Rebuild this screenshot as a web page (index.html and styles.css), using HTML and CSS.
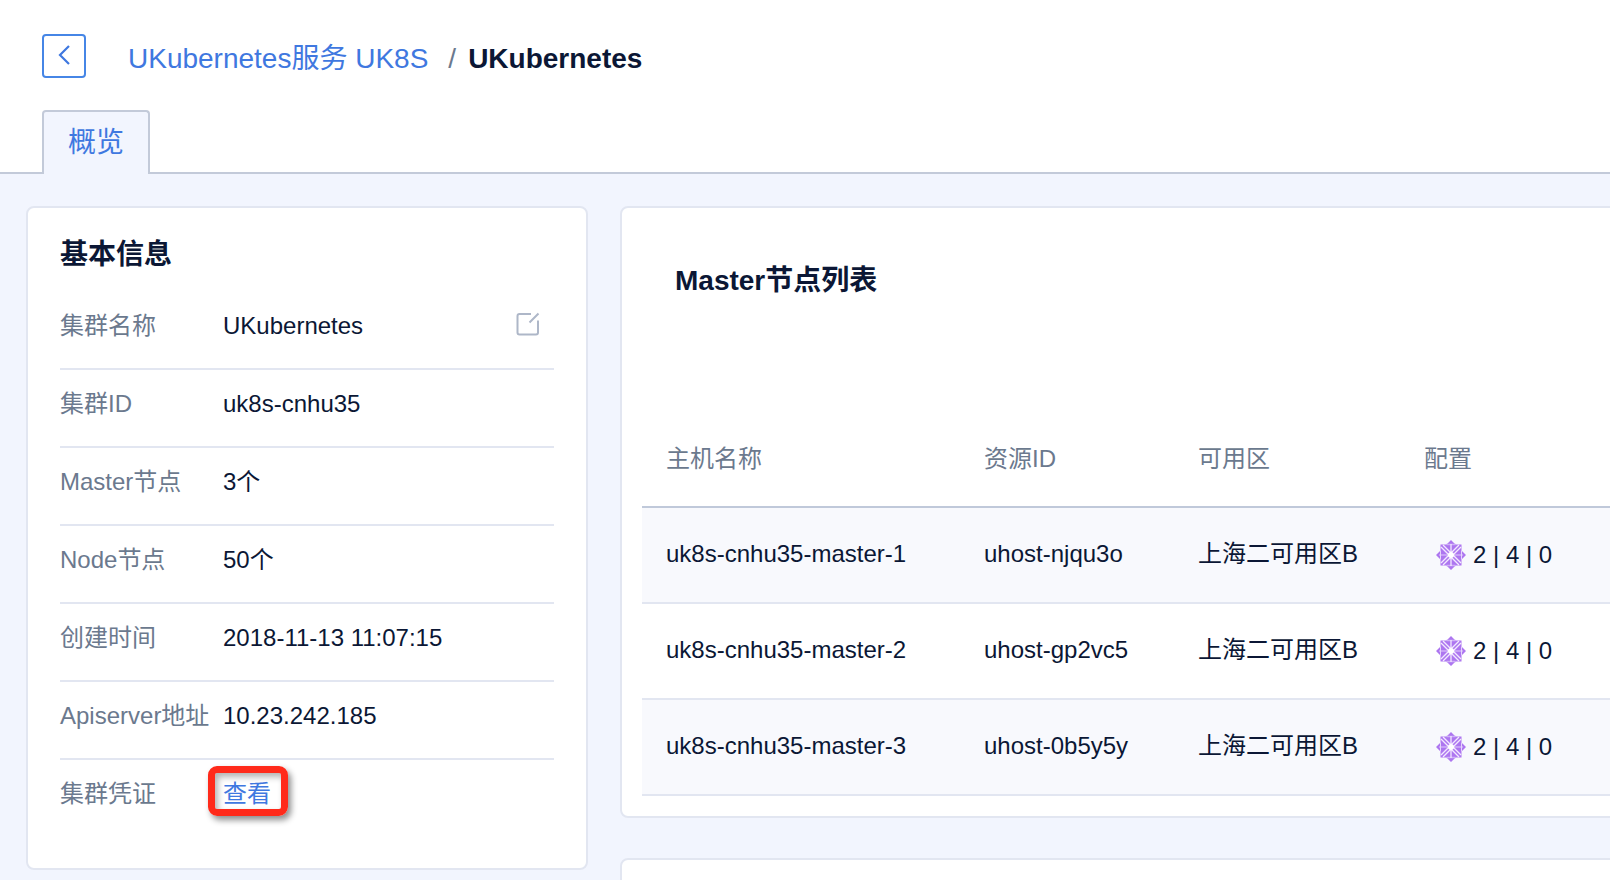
FILE: index.html
```html
<!DOCTYPE html>
<html lang="zh-CN">
<head>
<meta charset="utf-8">
<title>UKubernetes</title>
<link rel="stylesheet" href="styles.css">
</head>
<body>
<svg class="sprite" aria-hidden="true">
  <symbol id="star" viewBox="0 0 30 30">
    <path fill="#ad76f0" d="M15 0l4.500 4.500H25.500V10.500L30 15l-4.500 4.500V25.500H19.500L15 30l-4.500-4.500H4.500V19.500L0 15l4.500-4.500V4.500H10.500z"/>
    <path stroke="#cfb0f7" stroke-width="1.500" d="M3 15H27M10.500 4.500H19.500M10.500 25.500H19.500"/>
    <path stroke="#e6d6fb" stroke-width="1" d="M4.500 10.500V19.500M25.500 10.500V19.500"/>
    <path stroke="#f3eafe" stroke-width="1.300" fill="none" d="M15 4V26M5 7L23 25M7 5L25 23M25 7L7 25M23 5L5 23"/>
    <path stroke="#ad76f0" stroke-width=".8" fill="none" d="M5 5L25 25M25 5L5 25"/>
    <circle cx="15" cy="15" r="3" fill="#fff"/>
  </symbol>
</svg>
<header class="header">
  <div class="title-bar">
    <button class="back" type="button" aria-label="返回">
      <svg width="12" height="20" viewBox="0 0 12 20"><path d="M11 1L2 10L11 19" fill="none" stroke="currentColor" stroke-width="2.200"/></svg>
    </button>
    <nav class="crumbs"><a href="#">UKubernetes服务 UK8S</a><span class="slash">/</span><strong>UKubernetes</strong></nav>
  </div>
  <nav class="tabs"><a class="tab" href="#">概览</a></nav>
</header>
<main class="main">
  <section class="card info">
    <h2 class="heading">基本信息</h2>
    <dl class="list">
      <div class="row"><dt>集群名称</dt><dd>UKubernetes</dd>
        <dd class="action"><button class="edit" type="button" aria-label="编辑">
          <svg width="24" height="24" viewBox="0 0 24 24"><path d="M15 2H3.500Q1.500 2 1.500 4V20.500Q1.500 22.500 3.500 22.500H20Q22 22.500 22 20.500V8.500M13.500 10.500L22.500 1.500" fill="none" stroke="currentColor" stroke-width="2"/></svg>
        </button></dd></div>
      <div class="row"><dt>集群ID</dt><dd>uk8s-cnhu35</dd></div>
      <div class="row"><dt>Master节点</dt><dd>3个</dd></div>
      <div class="row"><dt>Node节点</dt><dd>50个</dd></div>
      <div class="row"><dt>创建时间</dt><dd>2018-11-13 11:07:15</dd></div>
      <div class="row"><dt>Apiserver地址</dt><dd>10.23.242.185</dd></div>
      <div class="row"><dt>集群凭证</dt><dd><a class="view" href="#">查看</a></dd></div>
    </dl>
  </section>
  <div class="column">
    <section class="card masters">
      <h2 class="heading">Master节点列表</h2>
      <table class="table">
        <colgroup><col class="c-name"><col class="c-id"><col class="c-zone"><col></colgroup>
        <thead><tr><th>主机名称</th><th>资源ID</th><th>可用区</th><th>配置</th></tr></thead>
        <tbody>
          <tr><td>uk8s-cnhu35-master-1</td><td>uhost-njqu3o</td><td>上海二可用区B</td><td><span class="spec"><svg class="star"><use href="#star"/></svg>2 | 4 | 0</span></td></tr>
          <tr><td>uk8s-cnhu35-master-2</td><td>uhost-gp2vc5</td><td>上海二可用区B</td><td><span class="spec"><svg class="star"><use href="#star"/></svg>2 | 4 | 0</span></td></tr>
          <tr><td>uk8s-cnhu35-master-3</td><td>uhost-0b5y5y</td><td>上海二可用区B</td><td><span class="spec"><svg class="star"><use href="#star"/></svg>2 | 4 | 0</span></td></tr>
        </tbody>
      </table>
    </section>
    <section class="card next"></section>
  </div>
</main>
</body>
</html>
```
FILE: styles.css
```css
* { box-sizing: border-box; }
body {
  margin: 0;
  height: 100vh;
  display: flex;
  flex-direction: column;
  overflow: hidden;
  background: #f2f5fe;
  color: #0b1735;
  font: 24px/34px "Liberation Sans", "Noto Sans CJK SC", sans-serif;
}
a { color: #3f78e0; text-decoration: none; }
button { padding: 0; background: none; border: 0; cursor: pointer; }
svg { display: block; }
.sprite { position: absolute; width: 0; height: 0; }

.header { background: #fff; padding-top: 34px; }
.title-bar { display: flex; align-items: center; gap: 42px; height: 44px; padding-left: 42px; }
.back {
  width: 44px;
  height: 44px;
  display: flex;
  align-items: center;
  justify-content: center;
  padding-bottom: 2px;
  border: 2px solid #4686e6;
  border-radius: 4px;
  color: #3f78e0;
}
.crumbs { display: flex; font-size: 28px; line-height: 40px; padding-top: 6px; }
.slash { margin: 0 12px 0 20px; color: #6b798e; }
.tabs { display: flex; margin-top: 32px; }
.tabs::before, .tabs::after { content: ""; width: 42px; border-bottom: 2px solid #c3cad9; }
.tabs::after { flex: 1; }
.tab {
  height: 64px;
  padding: 0 24px;
  border: 2px solid #c3cad9;
  border-bottom: 0;
  border-radius: 4px 4px 0 0;
  background: #f2f5fe;
  font-size: 28px;
  line-height: 62px;
}

.main { flex: 1; min-height: 0; display: flex; align-items: flex-start; gap: 32px; padding: 32px 0 0 26px; }
.card { background: #fff; border: 2px solid #e2e6f1; border-radius: 8px; }
.heading { margin: 0; font-size: 28px; line-height: 40px; font-weight: bold; }
.info { flex: none; width: 562px; padding: 27px 32px 30px; }
.list { margin: 17px 0 0; }
.row { display: flex; height: 78px; padding-top: 17px; border-bottom: 2px solid #e2e6f1; }
.row:last-child { border-bottom-color: transparent; }
.row dt { flex: none; width: 163px; color: #6b798e; white-space: nowrap; }
.row dd { margin: 0; }
.row .action { margin-left: auto; padding-right: 14px; }
.edit { display: block; padding-top: 3px; color: #aeb7c8; }
.view { position: relative; display: block; }
.view::after {
  content: "";
  position: absolute;
  inset: -11px -17px -5px -15px;
  border: 7px solid #ff2a1a;
  border-radius: 9px;
  box-shadow: 3px 4px 6px rgba(0, 0, 0, .45), inset 3px 4px 6px rgba(0, 0, 0, .3);
}

.column { flex: 1; align-self: stretch; display: flex; flex-direction: column; gap: 40px; margin-right: -16px; }
.masters { padding: 53px 0 20px 20px; }
.masters .heading { padding-left: 33px; margin-bottom: 111px; }
.next { flex: 1; min-height: 0; margin-bottom: -16px; }
.table { width: 100%; border-collapse: separate; border-spacing: 0; table-layout: fixed; }
.c-name { width: 318px; }
.c-id { width: 214px; }
.c-zone { width: 226px; }
.table th, .table td { height: 96px; padding: 0 0 0 24px; text-align: left; font-weight: normal; border-bottom: 2px solid #e2e6f1; }
.table td { padding-bottom: 2px; }
.table td:last-child { padding-bottom: 0; }
.table th { color: #6b798e; border-bottom-color: #c0c9da; }
.table tbody tr:nth-child(odd) { background: #f8f9fd; }
.spec { display: flex; align-items: center; gap: 7px; padding-left: 12px; }
.star { width: 30px; height: 30px; }
```
